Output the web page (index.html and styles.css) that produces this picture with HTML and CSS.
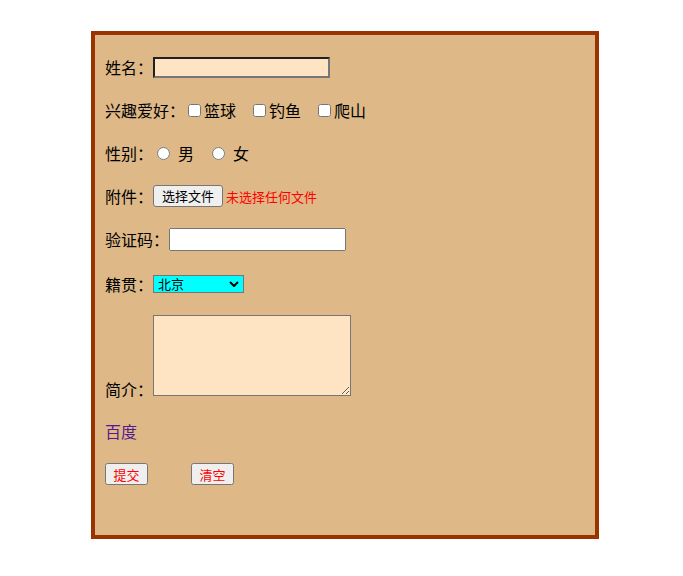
FILE: index.html
```html
<!DOCTYPE html>
<html lang="zh-CN">
<head>
  <meta charset="UTF-8">
  <meta name="viewport" content="width=device-width, initial-scale=1.0">
  <title>表单</title>
  <link rel="stylesheet" href="styles.css">
</head>
<body>
  <div class="box">
    <form class="form">
      <div class="row">姓名：<input type="text" class="name"></div>
      <div class="row">兴趣爱好：<input type="checkbox">篮球<span class="gap"></span><input type="checkbox">钓鱼<span class="gap"></span><input type="checkbox">爬山</div>
      <div class="row">性别：<input type="radio" name="sex"><span class="opt">男</span><span class="gap"></span><input type="radio" name="sex"><span class="opt">女</span></div>
      <div class="row">附件：<label class="file-btn">选择文件<input type="file" class="file"></label><span class="file-name">未选择任何文件</span></div>
      <div class="row">验证码：<input type="text" class="code"></div>
      <div class="row row-city">籍贯：<select class="city"><option>北京</option><option>上海</option><option>广州</option></select></div>
      <div class="row-text">简介：<textarea class="intro"></textarea></div>
      <div class="row"><a href="#" class="link">百度</a></div>
      <div class="row"><button type="button" class="btn">提交</button><button type="reset" class="btn btn-clear">清空</button></div>
    </form>
  </div>
</body>
</html>
```

FILE: styles.css
```css
body {
  margin: 0;
  font-family: "Noto Sans CJK SC", "Microsoft YaHei", sans-serif;
  font-size: 16px;
}
.box {
  width: 500px;
  height: 500px;
  margin: 31px 0 0 91px;
  border: 4px solid #993300;
  background-color: burlywood;
}
.form {
  padding: 18px 10px 10px;
}
.row {
  display: flex;
  align-items: center;
  height: 28px;
  margin-bottom: 15px;
  white-space: pre;
}
.row-city {
  margin-top: 17px;
}
.row-text {
  margin: 17px 0 16px;
  line-height: 23px;
}
.gap {
  display: inline-block;
  width: 14px;
}
.opt {
  margin-left: 5px;
}
input[type="checkbox"] {
  margin: 0 3px 0 3px;
}
input[type="radio"] {
  margin: 0 3px 0 4px;
}
.name {
  width: 173px;
  height: 17px;
  padding: 0;
  margin: 0;
  background-color: bisque;
}
.file {
  display: none;
}
.file-btn {
  display: inline-block;
  box-sizing: border-box;
  width: 70px;
  height: 22px;
  border: 1px solid #767676;
  border-radius: 3px;
  background-color: #efefef;
  font-size: 13px;
  line-height: 20px;
  text-align: center;
}
.file-name {
  margin-left: 3px;
  color: red;
  font-size: 13px;
}
.code {
  width: 173px;
  height: 19px;
  padding: 0;
  margin: 0;
}
.city {
  appearance: none;
  box-sizing: border-box;
  width: 91px;
  height: 18px;
  padding: 0 4px;
  margin: 0;
  border: 1px solid #767676;
  border-radius: 0;
  background: aqua url("data:image/svg+xml,%3Csvg xmlns='http://www.w3.org/2000/svg' width='10' height='6' viewBox='0 0 10 6'%3E%3Cpath d='M1 1l4 4 4-4' fill='none' stroke='black' stroke-width='2'/%3E%3C/svg%3E") no-repeat right 4px center;
  font-size: 13px;
  line-height: 16px;
  font-family: "Noto Sans CJK SC", sans-serif;
}
.intro {
  width: 192px;
  height: 75px;
  margin: 0;
  background-color: bisque;
}
.link {
  color: #551a8b;
  text-decoration: none;
}
.btn {
  box-sizing: border-box;
  width: 43px;
  height: 22px;
  padding: 0;
  color: red;
  font-size: 13px;
  font-family: "Noto Sans CJK SC", sans-serif;
}
.btn-clear {
  margin-left: 43px;
}
```
